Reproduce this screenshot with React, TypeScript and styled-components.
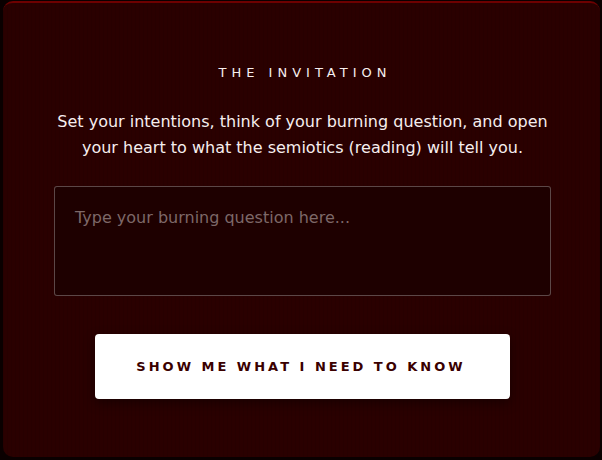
import React from "react";
import styled, { createGlobalStyle } from "styled-components";

const Global = createGlobalStyle`
  html, body { margin: 0; padding: 0; background: #0a0000; }
  body { font-family: "DejaVu Sans", Verdana, sans-serif; }
  * { box-sizing: border-box; }
`;

const Page = styled.div`
  padding: 1px 2px 3px 3px;
  height: 460px;
`;

const Card = styled.section`
  height: 456px;
  border-radius: 10px;
  border-top: 2px solid #6e0000;
  background-color: #2a0000;
  background-image: repeating-linear-gradient(
    90deg,
    rgba(0, 0, 0, 0.08) 0 1px,
    transparent 1px 4px
  );
  display: flex;
  flex-direction: column;
  align-items: center;
  padding: 62px 49px 0 51px;
`;

const Title = styled.h2`
  margin: 0;
  font-size: 13px;
  font-weight: 400;
  letter-spacing: 5px;
  color: #f6eeee;
  line-height: 16px;
  padding-left: 5px;
`;

const Lead = styled.p`
  margin: 28px 0 0;
  font-size: 16px;
  line-height: 26px;
  color: #f6eeee;
  text-align: center;
`;

const Question = styled.textarea`
  margin-top: 25px;
  width: 497px;
  height: 110px;
  resize: none;
  border: 1px solid rgba(255, 255, 255, 0.28);
  border-radius: 3px;
  background: #1e0000;
  color: #f4ecec;
  font-family: "DejaVu Sans", Verdana, sans-serif;
  font-size: 16px;
  line-height: 22px;
  padding: 20px 20px;
  outline: none;
  &::placeholder { color: #7d6868; }
`;

const Action = styled.button`
  margin-top: 38px;
  width: 415px;
  height: 65px;
  border: none;
  border-radius: 4px;
  background: #ffffff;
  color: #3a0000;
  font-family: "DejaVu Sans", Verdana, sans-serif;
  font-weight: 700;
  font-size: 13px;
  letter-spacing: 3px;
  padding-left: 3px;
  box-shadow: 0 4px 12px rgba(0, 0, 0, 0.4);
  cursor: pointer;
`;

export default function App() {
  return (
    <>
      <Global />
      <Page>
        <Card>
          <Title>THE INVITATION</Title>
          <Lead>
            Set your intentions, think of your burning question, and open
            <br />
            your heart to what the semiotics (reading) will tell you.
          </Lead>
          <Question placeholder="Type your burning question here..." />
          <Action>SHOW ME WHAT I NEED TO KNOW</Action>
        </Card>
      </Page>
    </>
  );
}
